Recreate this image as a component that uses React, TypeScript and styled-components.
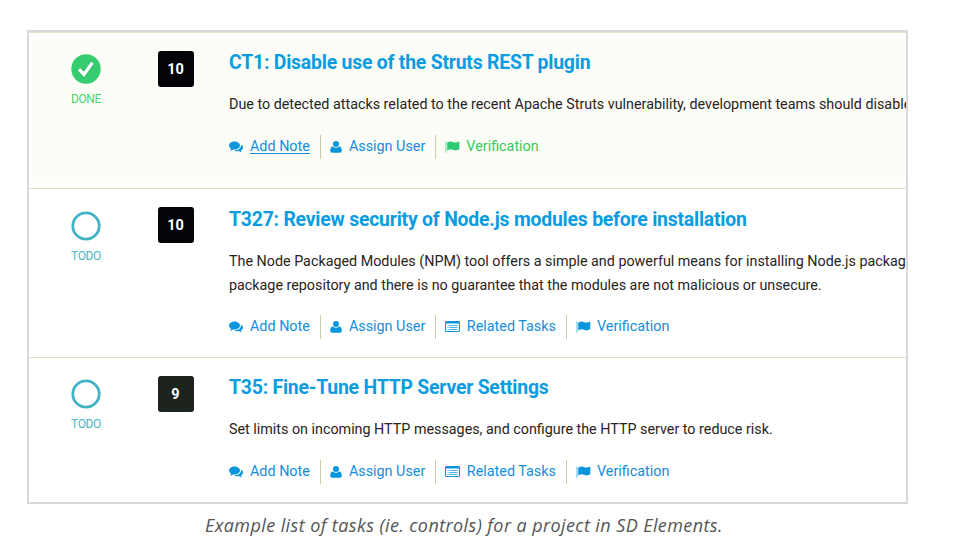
import React from 'react';
import styled, { createGlobalStyle } from 'styled-components';

const GlobalStyle = createGlobalStyle`
  * { box-sizing: border-box; }
  body { margin: 0; background: #fff; overflow: hidden; }
`;

const Page = styled.main`
  width: 962px;
  height: 547px;
  padding: 30px 0 0 27px;
  font-family: Roboto, sans-serif;
`;

const Frame = styled.section`
  width: 881px;
  height: 474px;
  border: 2px solid #d9d9d9;
  overflow: hidden;
`;

const Row = styled.article<{ $height: number; $done?: boolean }>`
  height: ${p => p.$height}px;
  border-top: 1px solid #e3e1c2;
  padding: ${p => (p.$done ? '6px 0 5px 3px' : '6px 0 0 3px')};
`;

const RowBody = styled.div<{ $done?: boolean }>`
  display: grid;
  grid-template-columns: 107px 90px 1fr;
  height: 100%;
  padding-top: 12px;
  border-radius: 4px 0 0 4px;
  background: ${p => (p.$done ? '#fcfdf7' : 'transparent')};
`;

const Status = styled.div<{ $done?: boolean; $inset: number }>`
  display: flex;
  flex-direction: column;
  align-items: center;
  padding: ${p => 3 + p.$inset}px 0 0 1px;
  color: ${p => (p.$done ? '#4fd35f' : '#45b8c2')};
  font-size: 12px;
  line-height: 14px;
  letter-spacing: -0.35px;
  svg { display: block; margin-bottom: 7.5px; }
`;

const Score = styled.div<{ $color: string }>`
  display: flex;
  align-items: center;
  justify-content: center;
  width: 36px;
  height: 36px;
  margin-left: 18.5px;
  border-radius: 3px;
  background: ${p => p.$color};
  color: #fff;
  font-size: 14.5px;
  font-weight: 700;
`;

const Details = styled.div<{ $inset: number }>`
  min-width: 0;
  padding-top: ${p => p.$inset}px;
`;

const Title = styled.h2`
  margin: 0 0 17px;
  color: #0a9ce0;
  font-size: 19.4px;
  font-weight: 700;
  letter-spacing: -0.21px;
  line-height: 24px;
  white-space: nowrap;
`;

const Description = styled.p`
  margin: 0;
  color: #29231c;
  font-size: 14.32px;
  line-height: 24px;
  white-space: pre;
`;

const Actions = styled.nav<{ $inset: number }>`
  display: flex;
  margin-top: ${p => 19 - p.$inset}px;
  height: 24px;
`;

const Action = styled.a<{ $green?: boolean; $underline?: boolean }>`
  display: flex;
  align-items: center;
  padding: 0 10px 0 9px;
  color: ${p => (p.$green ? '#35cc62' : '#168ddd')};
  font-size: 14.36px;
  line-height: 24px;
  white-space: nowrap;
  &:first-child { padding-left: 0; }
  & + & { border-left: 1px solid #cfcba6; }
  span { text-decoration: ${p => (p.$underline ? 'underline' : 'none')}; text-underline-offset: 2px; }
`;

const IconSlot = styled.i<{ $width: number; $green?: boolean }>`
  display: flex;
  width: ${p => p.$width}px;
  color: ${p => (p.$green ? '#2ecc71' : '#0a96dd')};
`;

const Caption = styled.p`
  margin: 8px 0 0 178px;
  color: #555;
  font-family: "Open Sans", sans-serif;
  font-size: 18px;
  font-style: italic;
  letter-spacing: 0.41px;
  line-height: 26px;
  white-space: nowrap;
`;

const StatusIcon = ({ done }: { done?: boolean }) => (
  <svg width="30" height="30" viewBox="0 0 30 30">
    {done ? (
      <>
        <circle cx="15" cy="15" r="14.7" fill="#35cd70" />
        <path d="M8 15.2 13 20.5 21.300 8.700" fill="none" stroke="#22b55d" strokeWidth="5" />
        <path d="M8 15.2 13 20.5 21.300 8.700" fill="none" stroke="#fff" strokeWidth="3.5" />
      </>
    ) : (
      <circle cx="15" cy="15" r="13.2" fill="#fff" stroke="#40b4c5" strokeWidth="2.8" />
    )}
  </svg>
);

const ListIcon = () => (
  <svg width="15" height="12" viewBox="0 0 15 12" fill="currentColor">
    <path fillRule="evenodd" d="M1.2 0h12.600q1.200 0 1.200 1.200v8.600q0 1.200-1.200 1.200H1.200Q0 11 0 9.800V1.200Q0 0 1.200 0ZM1 2.600v7.100q0 .3.300.3h12.400q.3 0 .3-.3V2.600Z" />
    <path opacity=".75" d="M2.500 4h1v1h-1zM4.500 4h8v1h-8zM2.500 6h1v1h-1zM4.500 6h8v1h-8zM2.500 8h1v1h-1zM4.500 8h8v1h-8z" />
  </svg>
);

const CommentsIcon = () => (
  <svg width="14" height="12" viewBox="0 0 14 12" fill="currentColor">
    <path d="M5.5.5C8.5.5 11 2.2 11 4.5S8.500 8.500 5.500 8.500q-.7 0-1.300-.1Q2.800 9.400.900 9.600q.9-.8 1.100-1.900Q0 6.500 0 4.500C0 2.200 2.500.5 5.500.5Z" />
    <path d="M11.900 3.400Q14 4.500 14 6.500q0 1.800-2 3 .2 1 1.100 1.800-1.900-.1-3.300-1.200-2.600.5-4.700-.7c3.700.1 6.900-1.800 6.900-4.900Q12 3.900 11.900 3.400Z" />
  </svg>
);

const UserIcon = () => (
  <svg width="12" height="13" viewBox="0 0 12 13" fill="currentColor">
    <circle cx="6" cy="3.100" r="3" />
    <path d="M3 5.400Q4.300 6.700 6 6.700T9 5.400Q11.800 5.600 11.800 9.600 11.800 11.800 9.900 11.800H2.100Q.2 11.800 .2 9.600.2 5.600 3 5.400Z" />
  </svg>
);

const FlagIcon = () => (
  <svg width="15" height="12" viewBox="0 0 15 12" fill="currentColor">
    <path d="M.4.4h1.100v11.400H.4z" opacity=".6" />
    <path d="M2.200 1.700Q5.500-.3 8.200 1.300 10.500 2.400 14.300.6V8.300Q10.800 10.200 8 8.800 5.500 7.600 2.200 9.500Z" />
  </svg>
);

interface Task {
  done?: boolean;
  score: number;
  color: string;
  title: string;
  text: string;
  height: number;
  inset: number;
  related?: boolean;
}

const tasks: Task[] = [
  {
    done: true, score: 10, color: '#030408', height: 156, inset: 0,
    title: 'CT1: Disable use of the Struts REST plugin',
    text: 'Due to detected attacks related to the recent Apache Struts vulnerability, development teams should disable',
  },
  {
    score: 10, color: '#030408', height: 169, inset: 1, related: true,
    title: 'T327: Review security of Node.js modules before installation',
    text: 'The Node Packaged Modules (NPM) tool offers a simple and powerful means for installing Node.js packag\npackage repository and there is no guarantee that the modules are not malicious or unsecure.',
  },
  {
    score: 9, color: '#1c241d', height: 145, inset: 0, related: true,
    title: 'T35: Fine-Tune HTTP Server Settings',
    text: 'Set limits on incoming HTTP messages, and configure the HTTP server to reduce risk.',
  },
];

const TaskRow = ({ task }: { task: Task }) => (
  <Row $height={task.height} $done={task.done}>
    <RowBody $done={task.done}>
      <Status $done={task.done} $inset={task.inset}>
        <StatusIcon done={task.done} />
        {task.done ? 'DONE' : 'TODO'}
      </Status>
      <Score $color={task.color}>{task.score}</Score>
      <Details $inset={task.inset}>
        <Title>{task.title}</Title>
        <Description>{task.text}</Description>
        <Actions $inset={task.inset}>
          <Action $underline={task.done}><IconSlot $width={21}><CommentsIcon /></IconSlot><span>Add Note</span></Action>
          <Action><IconSlot $width={19}><UserIcon /></IconSlot><span>Assign User</span></Action>
          {task.related && <Action><IconSlot $width={21.5}><ListIcon /></IconSlot><span>Related Tasks</span></Action>}
          <Action $green={task.done}><IconSlot $width={21} $green={task.done}><FlagIcon /></IconSlot><span>Verification</span></Action>
        </Actions>
      </Details>
    </RowBody>
  </Row>
);

export default function App() {
  return (
    <>
      <GlobalStyle />
      <Page>
        <Frame>
          {tasks.map(task => <TaskRow key={task.title} task={task} />)}
        </Frame>
        <Caption>Example list of tasks (ie. controls) for a project in SD Elements.</Caption>
      </Page>
    </>
  );
}
